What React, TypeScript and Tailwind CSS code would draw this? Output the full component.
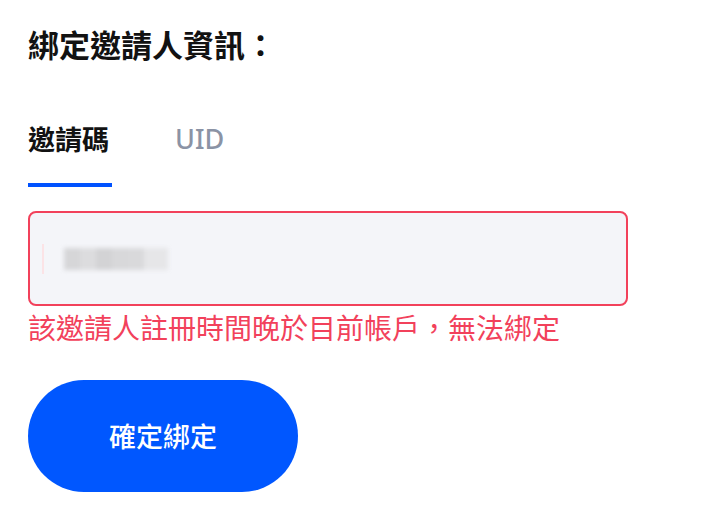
export default function App() {
  const cjk = { fontFamily: '"Noto Sans CJK TC", "Noto Sans", sans-serif' };

  return (
    <div
      className="w-[702px] h-[508px] overflow-hidden bg-white pl-[28px] pt-[24px]"
      style={cjk}
    >
      <h1 className="text-[31px] leading-[40px] font-bold text-[#121212]">
        綁定邀請人資訊：
      </h1>

      {/* Tabs */}
      <div className="mt-[57px] flex items-end gap-[63px]">
        <div className="flex flex-col">
          <span className="text-[27px] leading-[36px] font-bold text-[#121212]">
            邀請碼
          </span>
          <span className="mt-[26px] h-[4px] w-[84px] bg-[#0052ff]" />
        </div>
        <div className="flex flex-col">
          <span
            className="text-[27px] leading-[36px] font-medium text-[#8b93a5]"
            style={{ fontFamily: '"Noto Sans", sans-serif' }}
          >
            UID
          </span>
          <span className="mt-[26px] h-[4px]" />
        </div>
      </div>

      {/* Input */}
      <div className="mt-[24px] flex h-[95px] w-[600px] items-center rounded-[8px] border-2 border-[#f2415b] bg-[#f4f5f9] pl-[12px]">
        <span className="h-[30px] w-[2px] bg-[#fbe3e6]" />
        <div className="ml-[20px] flex h-[22px] blur-[2px]">
          <span className="w-[16px] bg-[#d6d6d8]" />
          <span className="w-[16px] bg-[#dcdcde]" />
          <span className="w-[16px] bg-[#d3d3d5]" />
          <span className="w-[16px] bg-[#d8d8da]" />
          <span className="w-[16px] bg-[#d9d9db]" />
          <span className="w-[24px] bg-[#e6e6e8]" />
        </div>
      </div>

      <p className="mt-[3px] text-[28px] leading-[36px] text-[#f2415b]">
        該邀請人註冊時間晚於目前帳戶，無法綁定
      </p>

      <button className="mt-[35px] flex h-[112px] w-[270px] items-center justify-center rounded-full bg-[#0057ff] text-[27px] font-medium text-white">
        確定綁定
      </button>
    </div>
  );
}
